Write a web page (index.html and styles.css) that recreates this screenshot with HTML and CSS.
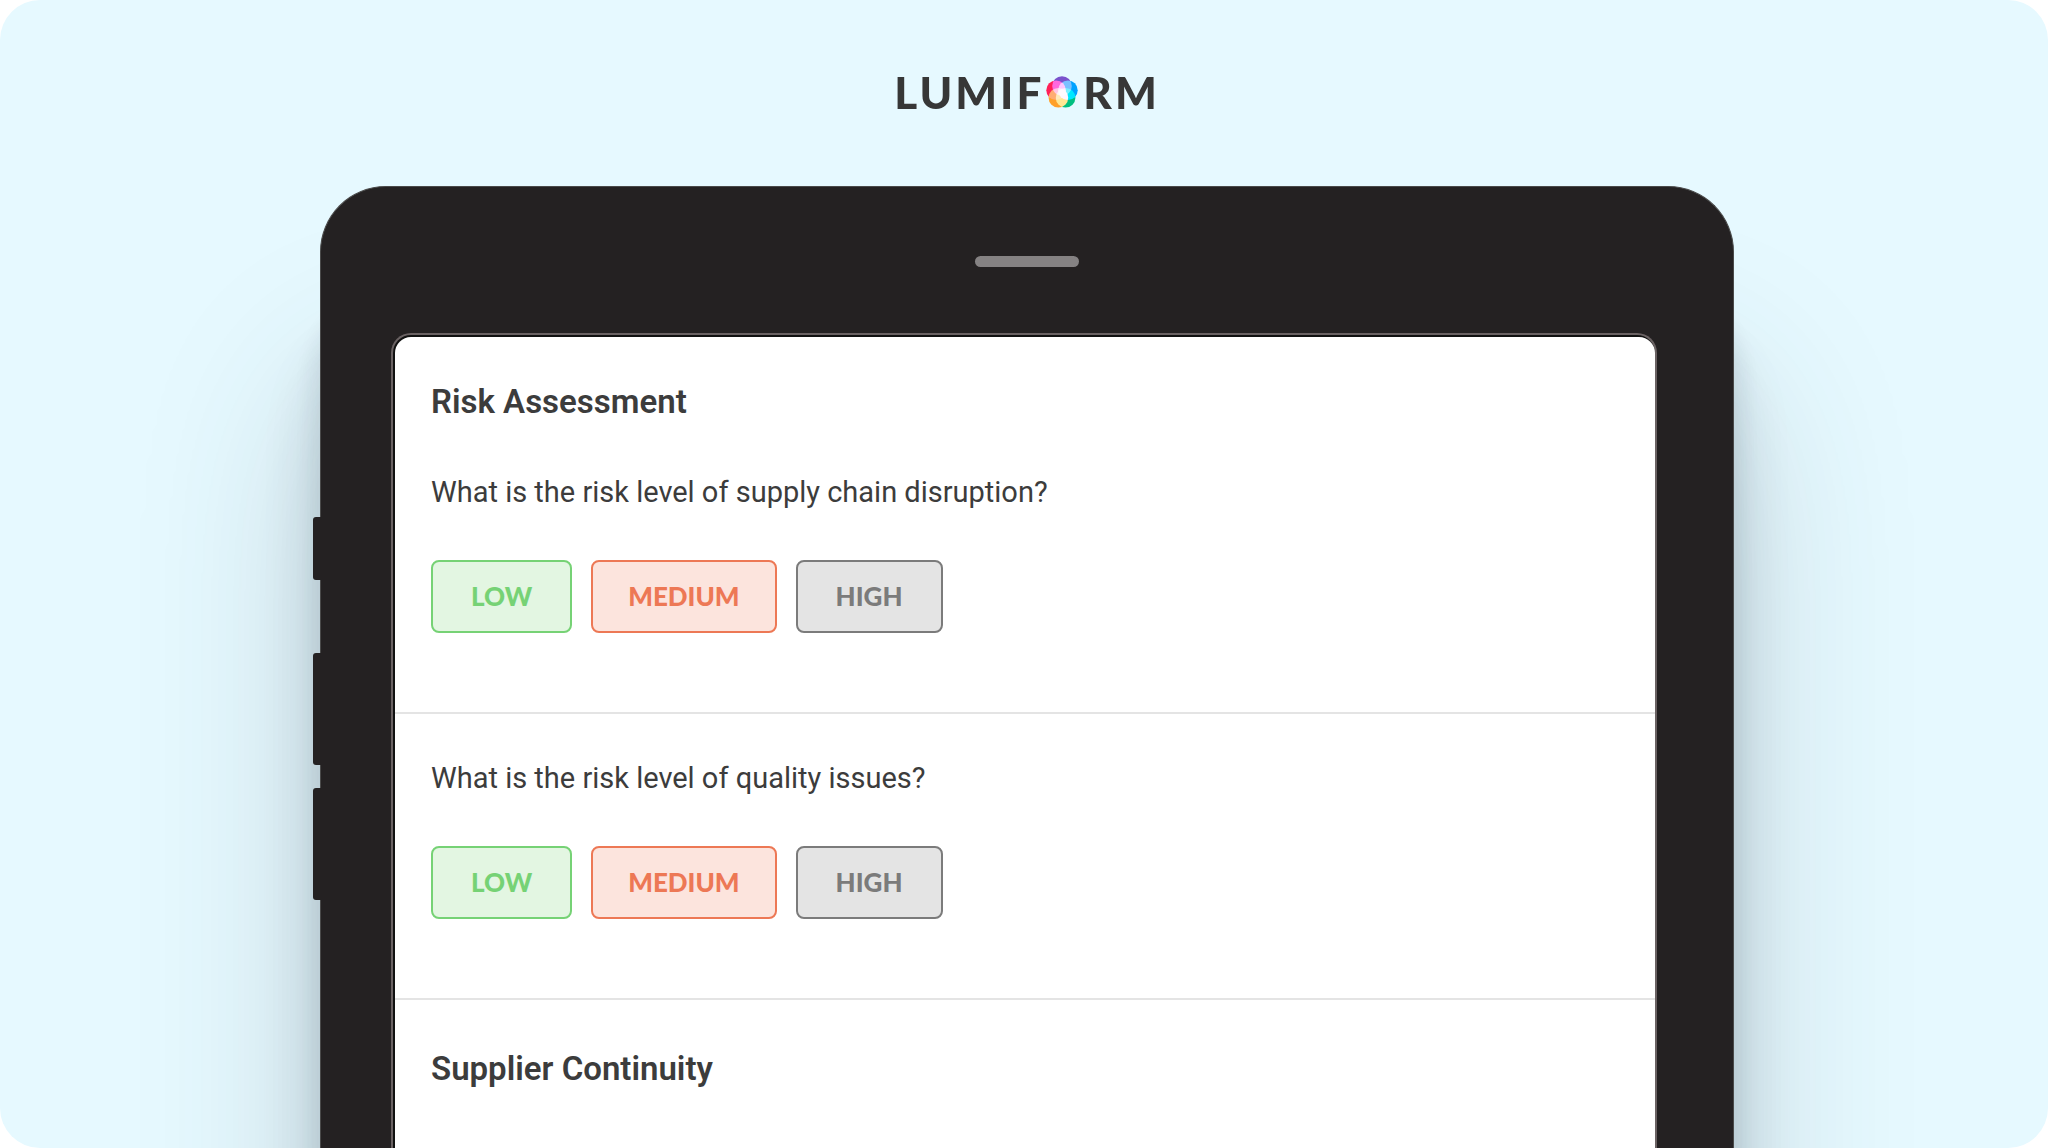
FILE: index.html
```html
<!DOCTYPE html>
<html lang="en">
<head>
<meta charset="utf-8">
<meta name="viewport" content="width=device-width, initial-scale=1">
<title>Lumiform</title>
<link rel="stylesheet" href="styles.css">
</head>
<body>
<div class="stage">
  <header class="brand">
    <span class="brand-text">LUMIF</span>
    <svg class="brand-mark" viewBox="0 0 32 32" role="img" aria-label="O">
      <g class="petals">
        <circle cx="16" cy="10" r="9.8" fill="#7a52cc"/>
        <circle cx="21.9" cy="14.3" r="9.8" fill="#00a2ff"/>
        <circle cx="19.6" cy="21.8" r="9.8" fill="#00bf80"/>
        <circle cx="12.4" cy="21.8" r="9.8" fill="#ffa028"/>
        <circle cx="10.1" cy="14.3" r="9.8" fill="#ff2058"/>
      </g>
    </svg>
    <span class="brand-text">RM</span>
  </header>

  <main class="tablet">
    <span class="side-key side-key-mute"></span>
    <span class="side-key side-key-up"></span>
    <span class="side-key side-key-down"></span>
    <div class="speaker"></div>
    <div class="bezel">
      <div class="screen">
        <section class="block">
          <h2 class="title">Risk Assessment</h2>
          <p class="question" id="q1">What is the risk level of supply chain disruption?</p>
          <div class="answers" role="group" aria-labelledby="q1">
            <button type="button" class="answer low">LOW</button>
            <button type="button" class="answer medium">MEDIUM</button>
            <button type="button" class="answer high">HIGH</button>
          </div>
        </section>
        <section class="block">
          <p class="question" id="q2">What is the risk level of quality issues?</p>
          <div class="answers" role="group" aria-labelledby="q2">
            <button type="button" class="answer low">LOW</button>
            <button type="button" class="answer medium">MEDIUM</button>
            <button type="button" class="answer high">HIGH</button>
          </div>
        </section>
        <section class="block block-last">
          <h2 class="title">Supplier Continuity</h2>
        </section>
      </div>
    </div>
  </main>
</div>
</body>
</html>
```
FILE: styles.css
```css
* {
  box-sizing: border-box;
}

body {
  margin: 0;
  background: #fff;
  color: #3c3c3c;
  font-family: Roboto, "Liberation Sans", sans-serif;
}

.stage {
  display: flex;
  flex-direction: column;
  min-height: 100vh;
  padding: 0 314px 0 320px;
  border-radius: 40px;
  background: #e6f9ff;
  overflow: hidden;
}

.brand {
  display: flex;
  align-items: center;
  justify-content: center;
  height: 186px;
  padding-bottom: 2px;
  color: #373737;
  font-family: Lato, "Open Sans", sans-serif;
  font-size: 44px;
  font-weight: 900;
  line-height: 48px;
}

.brand-text {
  letter-spacing: 3px;
}

.brand-mark {
  width: 32px;
  height: 32px;
  margin: 0 5px 0 2px;
}

.petals {
  isolation: isolate;
}

.petals circle {
  mix-blend-mode: screen;
}

.tablet {
  position: relative;
  flex: 1;
  display: flex;
  flex-direction: column;
  padding: 69px 70px 0;
  border: 1px solid #4a4a4a;
  border-bottom: 0;
  border-radius: 66px 66px 0 0;
  background: #242122;
  box-shadow:
    0 200px 180px rgba(50, 65, 75, 0.22),
    0 160px 70px rgba(50, 65, 75, 0.14),
    0 120px 30px rgba(50, 65, 75, 0.14);
}

.side-key {
  position: absolute;
  left: -8px;
  width: 8px;
  height: 112px;
  border-radius: 3px 0 0 3px;
  background: #242122;
}

.side-key-mute {
  top: 330px;
  height: 63px;
}

.side-key-up {
  top: 466px;
}

.side-key-down {
  top: 601px;
}

.speaker {
  align-self: center;
  width: 104px;
  height: 11px;
  margin-bottom: 66px;
  border-radius: 6px;
  background: #858283;
}

.bezel {
  flex: 1;
  display: flex;
  margin-right: 6px;
  padding: 2px 0 0 2px;
  border: 2px solid #6a6263;
  border-bottom: 0;
  border-radius: 20px 20px 0 0;
  background: #111;
}

.screen {
  flex: 1;
  border-radius: 16px 16px 0 0;
  background: #fff;
}

.block {
  padding: 46px 36px 79px;
  border-bottom: 2px solid #e4e4e4;
}

.block-last {
  padding-top: 50px;
  padding-bottom: 0;
  border-bottom: 0;
}

.title {
  margin: 0 0 53px;
  font-size: 33px;
  font-weight: 600;
  line-height: 38px;
}

.block-last .title {
  margin-bottom: 0;
}

.question {
  margin: 0 0 50px;
  font-size: 29px;
  line-height: 36px;
}

.answers {
  display: flex;
  flex-wrap: wrap;
  gap: 19px;
}

.answer {
  height: 73px;
  padding: 0 38px 2px;
  border: 2px solid;
  border-radius: 8px;
  font-family: Lato, "Open Sans", sans-serif;
  font-size: 26px;
  font-weight: 900;
  line-height: 32px;
}

.low {
  color: #76d275;
  background: #e3f6e2;
}

.medium {
  padding-right: 35px;
  padding-left: 35px;
  color: #ed7855;
  background: #fce4dd;
}

.high {
  color: #7b7b7b;
  background: #e4e4e4;
}
```
